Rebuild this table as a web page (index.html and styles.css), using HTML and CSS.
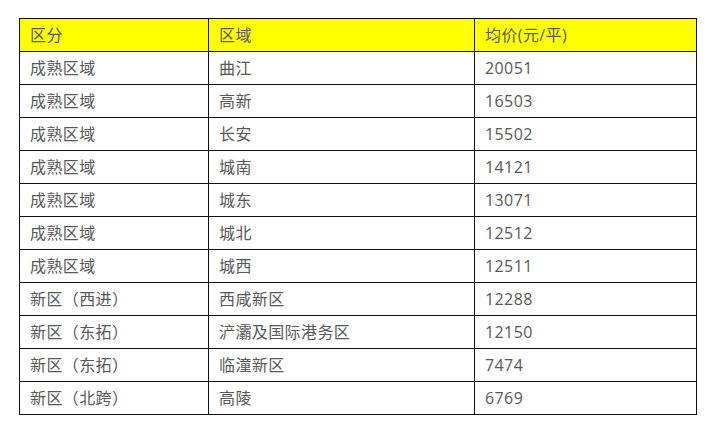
FILE: index.html
```html
<!DOCTYPE html>
<html lang="zh">
<head>
<meta charset="utf-8">
<link rel="stylesheet" href="styles.css">
</head>
<body>
<table class="price-table">
  <colgroup>
    <col class="c1"><col class="c2"><col class="c3">
  </colgroup>
  <thead>
    <tr class="head"><th>区分</th><th>区域</th><th>均价(元/平)</th></tr>
  </thead>
  <tbody>
    <tr><td>成熟区域</td><td>曲江</td><td>20051</td></tr>
    <tr><td>成熟区域</td><td>高新</td><td>16503</td></tr>
    <tr><td>成熟区域</td><td>长安</td><td>15502</td></tr>
    <tr><td>成熟区域</td><td>城南</td><td>14121</td></tr>
    <tr><td>成熟区域</td><td>城东</td><td>13071</td></tr>
    <tr><td>成熟区域</td><td>城北</td><td>12512</td></tr>
    <tr><td>成熟区域</td><td>城西</td><td>12511</td></tr>
    <tr><td>新区（西进）</td><td>西咸新区</td><td>12288</td></tr>
    <tr><td>新区（东拓）</td><td>浐灞及国际港务区</td><td>12150</td></tr>
    <tr><td>新区（东拓）</td><td>临潼新区</td><td>7474</td></tr>
    <tr><td>新区（北跨）</td><td>高陵</td><td>6769</td></tr>
  </tbody>
</table>
</body>
</html>
```
FILE: styles.css
```css
html, body {
  margin: 0;
  padding: 0;
  background: #fff;
}
body {
  padding: 18px 0 0 19px;
  font-family: "Open Sans", "Noto Sans CJK SC", sans-serif;
}
.price-table {
  border-collapse: collapse;
  table-layout: fixed;
  width: 677px;
  font-size: 16px;
  letter-spacing: 0.4px;
  color: #595959;
}
.c1 { width: 189px; }
.c2 { width: 266px; }
.c3 { width: 222px; }
.price-table th,
.price-table td {
  border: 1px solid #111;
  height: 32px;
  padding: 0 0 0 10px;
  text-align: left;
  font-weight: normal;
  line-height: 20px;
  vertical-align: middle;
  white-space: nowrap;
}
.head th {
  background: #ffff00;
}
```
